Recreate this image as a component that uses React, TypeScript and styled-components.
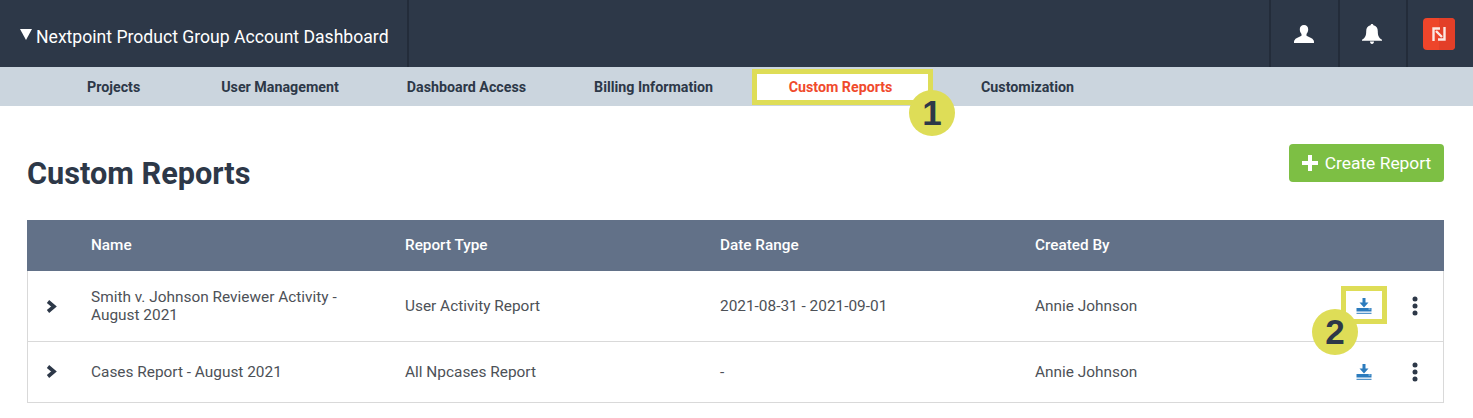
import React from 'react';
import styled, { createGlobalStyle } from 'styled-components';

const GlobalStyle = createGlobalStyle`
  html, body {
    margin: 0;
    padding: 0;
    background: #fff;
    font-family: Roboto, "Liberation Sans", sans-serif;
  }
`;

const Page = styled.div`
  width: 1473px;
  height: 418px;
  overflow: hidden;
  background: #fff;
`;

const TopBar = styled.header`
  height: 67px;
  display: flex;
  align-items: stretch;
  background: #2d3848;
`;

const Title = styled.div`
  width: 409px;
  box-sizing: border-box;
  padding: 6px 0 0 20px;
  display: flex;
  align-items: center;
  gap: 4px;
  color: #fff;
  font-size: 17.6px;
  border-right: 2px solid #232c3a;
`;

const Caret = styled.span`
  width: 0;
  height: 0;
  margin-top: -4px;
  border-left: 6.5px solid transparent;
  border-right: 6.5px solid transparent;
  border-top: 11px solid #fff;
`;

const TopActions = styled.div`
  margin-left: auto;
  display: flex;
`;

const TopAction = styled.div<{ $width: number; $shift: number }>`
  width: ${props => props.$width}px;
  box-sizing: border-box;
  padding-right: ${props => props.$shift}px;
  display: flex;
  align-items: center;
  justify-content: center;
  border-left: 2px solid #232c3a;
`;

const SubNav = styled.nav`
  height: 39px;
  display: flex;
  align-items: stretch;
  background: #cbd5de;
`;

const Tab = styled.div<{ $left: number }>`
  margin-left: ${props => props.$left}px;
  display: flex;
  align-items: center;
  color: #2d3848;
  font-size: 14.25px;
  font-weight: 700;
  white-space: nowrap;
`;

const ActiveTab = styled(Tab)`
  position: relative;
  box-sizing: border-box;
  width: 181px;
  height: 36px;
  margin-top: 2px;
  padding-right: 4px;
  justify-content: center;
  background: #fff;
  color: #f04a2c;
  border: 5px solid #dedd57;
`;

const Badge = styled.span<{ $x: number; $y: number }>`
  position: absolute;
  left: ${props => props.$x}px;
  top: ${props => props.$y}px;
  width: 46px;
  height: 46px;
  border-radius: 50%;
  display: flex;
  align-items: center;
  justify-content: center;
  background: #dedd57;
  color: #2d3848;
  font-family: "Liberation Sans", Arial, sans-serif;
  font-size: 35px;
  font-weight: 700;
`;

const Content = styled.main`
  padding: 38px 29px 0 27px;
`;

const HeadingRow = styled.div`
  height: 76px;
  display: flex;
  align-items: flex-start;
  justify-content: space-between;
`;

const Heading = styled.h1`
  margin: 12px 0 0;
  color: #2d3848;
  font-size: 30.7px;
  line-height: 36px;
  font-weight: 700;
`;

const CreateButton = styled.button`
  height: 38px;
  width: 155px;
  padding: 0;
  display: flex;
  align-items: center;
  justify-content: center;
  gap: 7px;
  border: none;
  border-radius: 4px;
  background: #7dbf44;
  color: #fff;
  font-family: inherit;
  font-size: 17.4px;
`;

const Table = styled.div`
  border: 1px solid #d9d9d9;
  border-top: none;
`;

const HeaderRow = styled.div`
  height: 51px;
  margin: 0 -1px;
  padding-bottom: 1px;
  box-sizing: border-box;
  display: grid;
  grid-template-columns: 64px 314px 315px 315px 1fr;
  align-items: center;
  background: #627188;
  color: #fff;
  font-size: 15.3px;
  font-weight: 500;
`;

const Row = styled.div<{ $height: number }>`
  height: ${props => props.$height}px;
  display: grid;
  grid-template-columns: 63px 314px 315px 315px 1fr 46px 56px;
  align-items: center;
  color: #4d5157;
  font-size: 15.4px;
  line-height: 18px;
  & + & {
    border-top: 1px solid #d9d9d9;
  }
`;

const NameCell = styled.div`
  width: 260px;
`;

const ChevronCell = styled.div<{ $lift?: number }>`
  padding: 0 0 ${props => props.$lift ?? 0}px 18px;
  display: flex;
`;

const IconCell = styled.div`
  position: relative;
  display: flex;
  justify-content: center;
`;

const Highlight = styled.span`
  position: absolute;
  left: 0;
  top: -12px;
  box-sizing: border-box;
  width: 46px;
  height: 38px;
  border: 5px solid #dedd57;
`;

const ChevronIcon = () => (
  <svg width="11" height="13" viewBox="0 0 11 13">
    <path d="M2 1.500 L8 6.500 L2 11.500" fill="none" stroke="#2d3848" strokeWidth="3.600" />
  </svg>
);

const UserIcon = () => (
  <svg width="20" height="18" viewBox="0 0 20 18">
    <path
      fill="#fff"
      d="M10 0c2.600 0 4.200 1.800 4.200 4.300 0 2-.8 3.700-1.700 4.800v1.700c2.500 1.300 6 2.300 7.200 4.600.3.600.3 1.300.3 2.600H0c0-1.300 0-2 .3-2.600 1.200-2.300 4.700-3.300 7.200-4.600V9.100C6.600 8 5.800 6.300 5.800 4.300 5.800 1.800 7.400 0 10 0z"
    />
  </svg>
);

const BellIcon = () => (
  <svg width="20" height="20" viewBox="0 0 20 20">
    <path
      fill="#fff"
      d="M10 0c.8 0 1.300.5 1.400 1.300 2.900.6 4.400 2.800 4.400 6 0 3.900.8 6.500 4.200 8.500v.9H0v-.9c3.400-2 4.200-4.600 4.200-8.500 0-3.200 1.500-5.400 4.400-6C8.700.5 9.200 0 10 0zM8 17.500h4c0 1.400-.8 2.500-2 2.500s-2-1.100-2-2.500z"
    />
  </svg>
);

const LogoIcon = () => (
  <svg width="32" height="32" viewBox="0 0 32 32">
    <rect width="32" height="32" rx="4" fill="#ee452a" />
    <path d="M16 0H28a4 4 0 0 1 4 4V16H16z" fill="#e33f28" />
    <path d="M16 16H32V28a4 4 0 0 1-4 4H16z" fill="#e33f28" />
    <path d="M10.500 23V10.500H17M21.500 9V21.500H15M13 13L19 19" fill="none" stroke="#fbe9e4" strokeWidth="2.400" />
  </svg>
);

const PlusIcon = () => (
  <svg width="16" height="16" viewBox="0 0 16 16">
    <path d="M6 0h4v6h6v4h-6v6H6v-6H0V6h6z" fill="#fff" />
  </svg>
);

const DownloadIcon = () => (
  <svg width="16" height="16" viewBox="0 0 16 16">
    <path d="M6.500 0h3v4.500H12.500L8 9.500 3.500 4.500H6.500z" fill="#2b7bbd" />
    <path d="M0.500 10h15v3.500H0.500z" fill="#2b7bbd" />
    <path d="M12.500 11h2" stroke="#bcdcf0" strokeWidth="1" />
    <path d="M0.500 15.300h15" stroke="#2b7bbd" strokeWidth="1" />
  </svg>
);

const MoreIcon = () => (
  <svg width="8" height="20" viewBox="0 0 8 20">
    <circle cx="4" cy="3" r="2.500" fill="#2d3848" />
    <circle cx="4" cy="10" r="2.500" fill="#2d3848" />
    <circle cx="4" cy="17" r="2.500" fill="#2d3848" />
  </svg>
);

export default function App() {
  return (
    <Page>
      <GlobalStyle />
      <TopBar>
        <Title>
          <Caret />
          Nextpoint Product Group Account Dashboard
        </Title>
        <TopActions>
          <TopAction $width={69} $shift={2}><UserIcon /></TopAction>
          <TopAction $width={68} $shift={2}><BellIcon /></TopAction>
          <TopAction $width={67} $shift={4}><LogoIcon /></TopAction>
        </TopActions>
      </TopBar>
      <SubNav>
        <Tab $left={87}>Projects</Tab>
        <Tab $left={81}>User Management</Tab>
        <Tab $left={68}>Dashboard Access</Tab>
        <Tab $left={68}>Billing Information</Tab>
        <ActiveTab $left={39}>
          Custom Reports
          <Badge $x={152} $y={16}>1</Badge>
        </ActiveTab>
        <Tab $left={48}>Customization</Tab>
      </SubNav>
      <Content>
        <HeadingRow>
          <Heading>Custom Reports</Heading>
          <CreateButton>
            <PlusIcon />
            Create Report
          </CreateButton>
        </HeadingRow>
        <Table>
          <HeaderRow>
            <span />
            <span>Name</span>
            <span>Report Type</span>
            <span>Date Range</span>
            <span>Created By</span>
          </HeaderRow>
          <Row $height={70}>
            <ChevronCell><ChevronIcon /></ChevronCell>
            <NameCell>Smith v. Johnson Reviewer Activity - August 2021</NameCell>
            <span>User Activity Report</span>
            <span>2021-08-31 - 2021-09-01</span>
            <span>Annie Johnson</span>
            <IconCell>
              <DownloadIcon />
              <Highlight />
              <Badge $x={-29} $y={11}>2</Badge>
            </IconCell>
            <IconCell><MoreIcon /></IconCell>
          </Row>
          <Row $height={60}>
            <ChevronCell $lift={2}><ChevronIcon /></ChevronCell>
            <NameCell>Cases Report - August 2021</NameCell>
            <span>All Npcases Report</span>
            <span>-</span>
            <span>Annie Johnson</span>
            <IconCell><DownloadIcon /></IconCell>
            <IconCell><MoreIcon /></IconCell>
          </Row>
        </Table>
      </Content>
    </Page>
  );
}
